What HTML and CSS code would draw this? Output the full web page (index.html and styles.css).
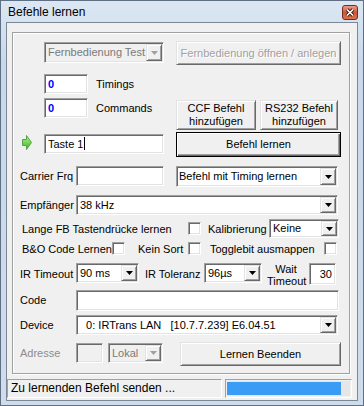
FILE: index.html
```html
<!DOCTYPE html>
<html lang="de">
<head>
<meta charset="UTF-8">
<meta name="viewport" content="width=device-width, initial-scale=1.0">
<title>Befehle lernen</title>
<link rel="stylesheet" href="styles.css">
</head>
<body>

<div class="window">
  <div class="titlebar">
    <div class="title">Befehle lernen</div>
    <div class="close">
      <svg width="16" height="15" viewBox="0 0 16 15">
        <defs>
          <linearGradient id="closeGrad" x1="0" y1="0" x2="0" y2="1">
            <stop offset="0" stop-color="#eaa691"/>
            <stop offset="0.5" stop-color="#cc573d"/>
            <stop offset="1" stop-color="#d9754f"/>
          </linearGradient>
        </defs>
        <rect x="0.5" y="0.5" width="15" height="14" rx="2.5" fill="url(#closeGrad)" stroke="#7b2b1b"/>
        <path d="M5 4.5l6 6M11 4.5l-6 6" stroke="#3b1a10" stroke-width="3.4"/>
        <path d="M5 4.5l6 6M11 4.5l-6 6" stroke="#fff" stroke-width="1.6"/>
      </svg>
    </div>
  </div>

  <div class="client">
    <div class="group">

      <div class="row r1">
        <div class="left">
          <div class="combo disabled c-remote">
            <span class="value">Fernbedienung Test</span>
            <span class="drop"><svg width="7" height="4" viewBox="0 0 7 4"><path d="M0 0h7l-3.5 4z"/></svg></span>
          </div>
        </div>
        <button class="btn disabled b-open">Fernbedienung öffnen / anlegen</button>
      </div>

      <div class="row r2">
        <div class="left">
          <div class="edit count">0</div>
          <span class="lbl name">Timings</span>
        </div>
      </div>

      <div class="row r3">
        <div class="left">
          <div class="edit count">0</div>
          <span class="lbl name">Commands</span>
        </div>
        <button class="btn b-ccf">CCF Befehl<br>hinzufügen</button>
        <button class="btn b-rs">RS232 Befehl<br>hinzufügen</button>
      </div>

      <div class="row r4">
        <div class="left">
          <svg class="arrow" width="10" height="15" viewBox="0 0 10 15">
            <defs>
              <linearGradient id="arrowGrad" x1="0" y1="0" x2="0" y2="1">
                <stop offset="0" stop-color="#b2f58a"/>
                <stop offset="1" stop-color="#3db12b"/>
              </linearGradient>
            </defs>
            <path d="M0.5 4.5h4v-4l5 7-5 7v-4h-4z" fill="url(#arrowGrad)" stroke="#55a443"/>
          </svg>
          <div class="edit e-key">Taste 1<span class="caret"></span></div>
        </div>
        <button class="btn default b-learn">Befehl lernen</button>
      </div>

      <div class="row r5">
        <span class="lbl field">Carrier Frq</span>
        <div class="edit e-carrier"></div>
        <div class="combo c-mode">
          <span class="value">Befehl mit Timing lernen</span>
          <span class="drop"><svg width="7" height="4" viewBox="0 0 7 4"><path d="M0 0h7l-3.5 4z"/></svg></span>
        </div>
      </div>

      <div class="row r6">
        <span class="lbl field">Empfänger</span>
        <div class="combo c-wide">
          <span class="value">38 kHz</span>
          <span class="drop"><svg width="7" height="4" viewBox="0 0 7 4"><path d="M0 0h7l-3.5 4z"/></svg></span>
        </div>
      </div>

      <div class="row r7">
        <span class="lbl l-long">Lange FB Tastendrücke lernen</span>
        <span class="chk"></span>
        <span class="lbl l-calib">Kalibrierung</span>
        <div class="combo c-calib">
          <span class="value">Keine</span>
          <span class="drop"><svg width="7" height="4" viewBox="0 0 7 4"><path d="M0 0h7l-3.5 4z"/></svg></span>
        </div>
      </div>

      <div class="row r8">
        <span class="lbl l-bo">B&amp;O Code Lernen</span>
        <span class="chk"></span>
        <span class="lbl l-sort">Kein Sort</span>
        <span class="chk"></span>
        <span class="lbl l-toggle">Togglebit ausmappen</span>
        <span class="chk"></span>
      </div>

      <div class="row r9">
        <span class="lbl field">IR Timeout</span>
        <div class="combo c-timeout">
          <span class="value">90 ms</span>
          <span class="drop"><svg width="7" height="4" viewBox="0 0 7 4"><path d="M0 0h7l-3.5 4z"/></svg></span>
        </div>
        <span class="lbl l-tol">IR Toleranz</span>
        <div class="combo c-tol">
          <span class="value">96µs</span>
          <span class="drop"><svg width="7" height="4" viewBox="0 0 7 4"><path d="M0 0h7l-3.5 4z"/></svg></span>
        </div>
        <span class="lbl l-wait">Wait<br>Timeout</span>
        <div class="edit e-wait">30</div>
      </div>

      <div class="row r10">
        <span class="lbl field">Code</span>
        <div class="edit e-code"></div>
      </div>

      <div class="row r11">
        <span class="lbl field">Device</span>
        <div class="combo c-wide">
          <span class="value device">  0: IRTrans LAN   [10.7.7.239] E6.04.51</span>
          <span class="drop"><svg width="7" height="4" viewBox="0 0 7 4"><path d="M0 0h7l-3.5 4z"/></svg></span>
        </div>
      </div>

      <div class="row r12">
        <span class="lbl field off">Adresse</span>
        <div class="edit disabled e-addr"></div>
        <div class="combo disabled c-local">
          <span class="value">Lokal</span>
          <span class="drop"><svg width="7" height="4" viewBox="0 0 7 4"><path d="M0 0h7l-3.5 4z"/></svg></span>
        </div>
        <button class="btn b-stop">Lernen Beenden</button>
      </div>

    </div>

    <div class="statusbar">
      <div class="panel p-text">Zu lernenden Befehl senden ...</div>
      <div class="panel p-progress">
        <div class="progress"><div class="fill" style="width: 114px"></div></div>
      </div>
    </div>
  </div>
</div>

</body>
</html>
```

FILE: styles.css
```css
body {
  margin: 0;
  background-color: #fff;
  color: #000;
  font-family: "Liberation Sans", Arial, sans-serif;
  font-size: 11px;
}
.window {
  width: 364px;
  height: 406px;
  box-sizing: border-box;
  border: 1px solid #5f7084;
  background: linear-gradient(#dce7f3, #c9d9eb 60px, #cfdcec);
  display: flex;
  flex-direction: column;
}
.titlebar {
  height: 21px;
  display: flex;
  align-items: flex-start;
}
.title {
  padding: 1px 0 0 7px;
  line-height: 21px;
  font-size: 12px;
  color: #000;
}
.close {
  margin: 4px 5px 0 auto;
  height: 15px;
}
.client {
  margin: 0 5px;
  height: 379px;
  box-sizing: border-box;
  border: 1px solid #7d8896;
  background-color: #f0f0f0;
}
.group {
  margin: 9px 7px 0 5px;
  padding: 0 0 7px 7px;
  border: 1px solid #a0a0a0;
  box-shadow: inset 1px 1px #fff, 1px 1px #fff;
}
.row {
  display: flex;
  align-items: flex-start;
}
.left {
  width: 156px;
  flex: none;
  display: flex;
  align-items: center;
}
.lbl {
  white-space: nowrap;
  flex: none;
}
.field {
  width: 56px;
  line-height: 20px;
}
.off {
  color: #8d8d8d;
}

/* controls */
.edit {
  box-sizing: border-box;
  height: 20px;
  flex: none;
  background-color: #fff;
  border: 1px solid;
  border-color: #a0a0a0 #fff #fff #a0a0a0;
  box-shadow: inset 1px 1px #696969, inset -1px -1px #e3e3e3;
  padding: 0 3px;
  line-height: 18px;
  white-space: nowrap;
}
.edit.disabled {
  background-color: #f0f0f0;
}
.count {
  width: 44px;
  margin-left: 24px;
  color: #0000ff;
  font-weight: bold;
}
.caret {
  display: inline-block;
  width: 1px;
  height: 13px;
  margin-left: 1px;
  background-color: #000;
  vertical-align: -2px;
}
.combo {
  box-sizing: border-box;
  height: 20px;
  flex: none;
  display: flex;
  padding: 1px;
  background-color: #fff;
  border: 1px solid;
  border-color: #a0a0a0 #fff #fff #a0a0a0;
  box-shadow: inset 1px 1px #696969, inset -1px -1px #e3e3e3;
}
.combo .value {
  flex: 1;
  padding-left: 2px;
  overflow: hidden;
  white-space: nowrap;
  line-height: 16px;
}
.combo .drop {
  width: 16px;
  flex: none;
  box-sizing: border-box;
  display: flex;
  align-items: center;
  justify-content: center;
  background-color: #f0f0f0;
  border: 1px solid;
  border-color: #e3e3e3 #696969 #696969 #e3e3e3;
  box-shadow: inset 1px 1px #fff, inset -1px -1px #a0a0a0;
}
.combo.disabled {
  background-color: #f0f0f0;
  color: #7a7a7a;
}
.combo.disabled .drop svg {
  fill: #a0a0a0;
}
.btn {
  box-sizing: border-box;
  flex: none;
  margin: 0;
  padding: 0;
  font: inherit;
  color: #000;
  line-height: 13px;
  text-align: center;
  background-color: #f0f0f0;
  border: 1px solid;
  border-color: #e3e3e3 #696969 #696969 #e3e3e3;
  box-shadow: inset 1px 1px #fff, inset -1px -1px #a0a0a0;
}
.btn.disabled {
  color: #a0a0a0;
  text-shadow: 1px 1px #fff;
}
.btn.default {
  border-color: #000;
  box-shadow: inset 1px 1px #fff, inset -1px -1px #696969, inset -2px -2px #a0a0a0;
}
.chk {
  box-sizing: border-box;
  width: 13px;
  height: 13px;
  flex: none;
  background-color: #fff;
  border: 1px solid;
  border-color: #a0a0a0 #fff #fff #a0a0a0;
  box-shadow: inset 1px 1px #696969, inset -1px -1px #e3e3e3;
}

/* rows */
.r1 {
  margin-top: 8px;
  height: 25px;
}
.c-remote {
  width: 120px;
  height: 21px;
  margin: 1px 0 0 24px;
}
.b-open {
  width: 165px;
  height: 24px;
}
.r2 {
  margin-top: 8px;
  height: 20px;
}
.name {
  margin-left: 8px;
}
.r3 {
  margin-top: 4px;
  height: 32px;
}
.b-ccf {
  width: 80px;
  height: 30px;
  margin-top: 2px;
}
.b-rs {
  width: 78px;
  height: 30px;
  margin: 2px 0 0 4px;
}
.r4 {
  margin-top: 2px;
  height: 25px;
}
.r4 .left {
  align-items: flex-start;
}
.arrow {
  margin: 3px 0 0 2px;
  flex: none;
}
.e-key {
  width: 120px;
  margin: 2px 0 0 12px;
}
.b-learn {
  width: 165px;
  height: 25px;
}
.r5 {
  margin-top: 9px;
  height: 21px;
}
.e-carrier {
  width: 88px;
}
.c-mode {
  width: 162px;
  height: 21px;
  margin-left: 12px;
}
.c-mode .value {
  padding-left: 1px;
  line-height: 17px;
}
.r6 {
  margin-top: 8px;
  height: 20px;
}
.c-wide {
  width: 262px;
}
.r7 {
  margin-top: 4px;
  height: 19px;
  align-items: center;
}
.l-long {
  width: 166px;
  margin-left: 2px;
}
.l-calib {
  width: 61px;
  margin-left: 7px;
}
.c-calib {
  width: 70px;
  height: 19px;
}
.c-calib .value {
  line-height: 15px;
}
.r8 {
  margin-top: 4px;
  height: 13px;
  align-items: center;
}
.l-bo {
  width: 90px;
  margin-left: 2px;
}
.l-sort {
  width: 50px;
  margin-left: 13px;
}
.l-toggle {
  width: 114px;
  margin-left: 9px;
}
.r9 {
  margin-top: 2px;
  height: 30px;
}
.r9 .field {
  margin-top: 6px;
  line-height: 22px;
}
.c-timeout {
  width: 63px;
  margin-top: 6px;
}
.l-tol {
  width: 59px;
  margin: 6px 0 0 6px;
  line-height: 22px;
}
.c-tol {
  width: 58px;
  margin-top: 6px;
}
.l-wait {
  width: 38px;
  margin: 6px 0 0 5px;
  line-height: 12px;
  text-align: center;
}
.e-wait {
  width: 27px;
  height: 22px;
  margin: 6px 0 0 4px;
  text-align: right;
  line-height: 20px;
}
.r10 {
  margin-top: 3px;
  height: 21px;
}
.e-code {
  width: 263px;
  height: 21px;
}
.r11 {
  margin-top: 4px;
  height: 20px;
}
.combo .device {
  white-space: pre;
}
.r12 {
  margin-top: 7px;
  height: 24px;
}
.r12 .field {
  margin-top: 1px;
}
.e-addr {
  width: 27px;
  margin-top: 1px;
}
.c-local {
  width: 55px;
  margin: 1px 0 0 5px;
}
.b-stop {
  width: 161px;
  height: 24px;
  margin-left: 17px;
}

/* status bar */
.statusbar {
  display: flex;
  margin-top: 4px;
  height: 22px;
}
.panel {
  box-sizing: border-box;
  height: 19px;
  margin-top: 1px;
  border: 1px solid;
  border-color: #a0a0a0 #fff #fff #a0a0a0;
}
.p-text {
  width: 215px;
  padding-left: 3px;
  line-height: 17px;
  font-size: 12px;
  white-space: nowrap;
}
.p-progress {
  width: 127px;
  margin-left: 3px;
  padding: 1px;
}
.progress {
  height: 15px;
  box-sizing: border-box;
  padding: 1px 0;
  background-color: #e6e6e6;
}
.fill {
  height: 13px;
  background-color: #3a9cf5;
}
```
